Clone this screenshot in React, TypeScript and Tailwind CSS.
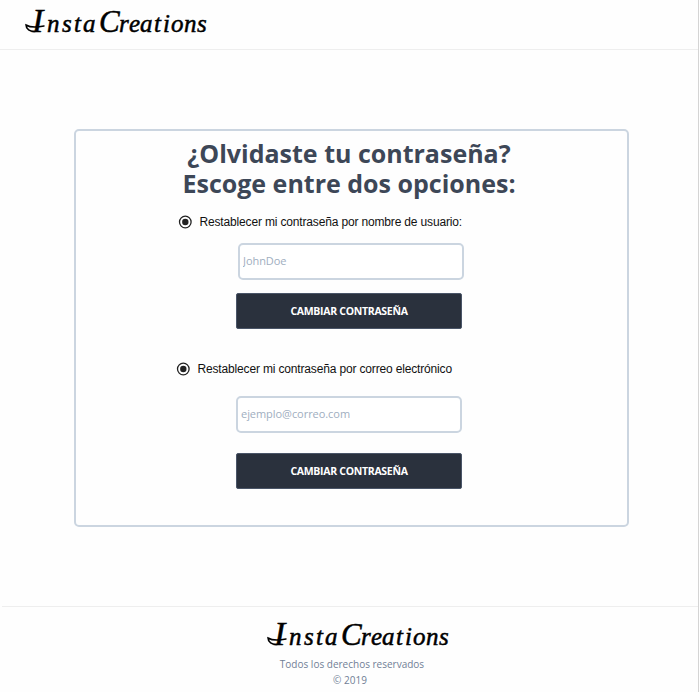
import React from "react";

function Logo() {
  return (
    <svg
      className="block h-[36px] w-[190px] overflow-visible"
      viewBox="0 0 190 36"
      role="img"
      aria-label="InstaCreations"
    >
      <text
        y="28"
        x="10 25 40 52 61 77 97 107 118 132 141 149 162 175"
        className="fill-black stroke-black stroke-[0.5px] font-['Liberation_Serif',cursive] text-[25px] italic"
      >
        <tspan className="text-[34px]">I</tspan>nsta<tspan className="text-[31px]">C</tspan>reations
      </text>
      <path
        d="M13 27.5C8 28 4 25 4 21C8 23.5 15 23.5 22 22"
        fill="none"
        stroke="black"
        strokeWidth="1.5"
        strokeLinecap="round"
      />
    </svg>
  );
}

function RadioOption({ label }: { label: string }) {
  return (
    <label className="flex h-[14px] items-center font-['Liberation_Sans',sans-serif] text-[12px] leading-[14px] tracking-[-0.16px] text-[#111]">
      <svg className="mr-[7.5px] block h-[14px] w-[14px]" viewBox="0 0 14 14">
        <circle cx="7.3" cy="7" r="5.8" fill="white" stroke="#222" strokeWidth="1.3" />
        <circle cx="7.3" cy="7" r="3.2" fill="#222" />
      </svg>
      <span className="whitespace-nowrap">{label}</span>
    </label>
  );
}

function Field({ placeholder }: { placeholder: string }) {
  return (
    <input
      className="block h-[37px] w-[226px] rounded-[5px] border-2 border-[#cbd5e0] bg-white px-[3px] pb-[2px] text-[11px] tracking-[-0.05px] text-gray-700 placeholder:text-[#a0aec0]"
      placeholder={placeholder}
    />
  );
}

function SubmitButton() {
  return (
    <button className="block h-[36px] w-[226px] rounded-[2px] border border-[#4a5568] bg-[#2a313d] pt-[1px] text-[10.5px] font-bold tracking-[-0.3px] text-white">
      CAMBIAR CONTRASEÑA
    </button>
  );
}

export default function App() {
  return (
    <div className="flex h-[692px] w-[699px] flex-col overflow-hidden border-r border-[#d4d4d4] bg-[#fefefe] font-['Open_Sans',sans-serif]">
      <header className="h-[50px] border-b border-[#eeeeee] pl-[22px] pt-[4px]">
        <Logo />
      </header>
      <main className="h-[556px] pl-[74px] pt-[79px]">
        <section className="h-[398px] w-[555px] rounded-[5px] border-2 border-[#cbd5e0]">
          <h1 className="mt-[7px] w-[546px] text-center text-[25px] leading-[30px] font-bold text-[#3d4757]">
            ¿Olvidaste tu contraseña?
            <br />
            Escoge entre dos opciones:
          </h1>
          <div className="mt-[17px] pl-[102px]">
            <RadioOption label="Restablecer mi contraseña por nombre de usuario:" />
          </div>
          <div className="mt-[14px] pl-[162px]">
            <Field placeholder="JohnDoe" />
          </div>
          <div className="mt-[13px] pl-[160px]">
            <SubmitButton />
          </div>
          <div className="mt-[33px] pl-[100px]">
            <RadioOption label="Restablecer mi contraseña por correo electrónico" />
          </div>
          <div className="mt-[20px] pl-[160px]">
            <Field placeholder="ejemplo@correo.com" />
          </div>
          <div className="mt-[20px] pl-[160px]">
            <SubmitButton />
          </div>
        </section>
      </main>
      <footer className="ml-[2px] h-[86px] border-t border-[#eeeeee] pt-[10px] text-[10px] leading-[16px] text-[#718096]">
        <div className="pl-[262px]">
          <Logo />
        </div>
        <p className="mt-[3px] pl-[4px] text-center">Todos los derechos reservados</p>
        <p className="text-center">© 2019</p>
      </footer>
    </div>
  );
}
